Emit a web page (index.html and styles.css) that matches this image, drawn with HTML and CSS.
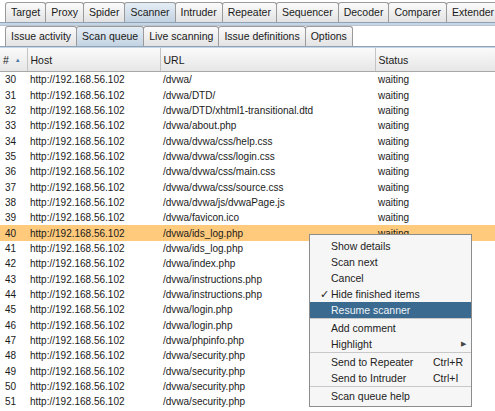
FILE: index.html
```html
<!DOCTYPE HTML>
<html>
<head>
<meta charset="UTF-8">
<link rel="stylesheet" href="styles.css">
</head>
<body>

<!-- top level tools -->
<div class="tabs main-tabs">
    <div class="tab">Target</div>
    <div class="tab">Proxy</div>
    <div class="tab">Spider</div>
    <div class="tab active">Scanner</div>
    <div class="tab">Intruder</div>
    <div class="tab">Repeater</div>
    <div class="tab">Sequencer</div>
    <div class="tab">Decoder</div>
    <div class="tab">Comparer</div>
    <div class="tab">Extender</div>
</div>
<div class="band"></div>

<!-- scanner sub tabs -->
<div class="tabs sub-tabs">
    <div class="tab">Issue activity</div>
    <div class="tab active">Scan queue</div>
    <div class="tab">Live scanning</div>
    <div class="tab">Issue definitions</div>
    <div class="tab">Options</div>
</div>
<div class="band thin"></div>

<div class="queue">
    <table class="table">
        <colgroup>
            <col class="c-num"><col class="c-host"><col class="c-url"><col class="c-status">
        </colgroup>
        <tr class="head">
            <th>#<span class="sort">&#9650;</span></th><th>Host</th><th>URL</th><th>Status</th>
        </tr>
        <tr><td>30</td><td>http://192.168.56.102</td><td>/dvwa/</td><td>waiting</td></tr>
        <tr><td>31</td><td>http://192.168.56.102</td><td>/dvwa/DTD/</td><td>waiting</td></tr>
        <tr><td>32</td><td>http://192.168.56.102</td><td>/dvwa/DTD/xhtml1-transitional.dtd</td><td>waiting</td></tr>
        <tr><td>33</td><td>http://192.168.56.102</td><td>/dvwa/about.php</td><td>waiting</td></tr>
        <tr><td>34</td><td>http://192.168.56.102</td><td>/dvwa/dvwa/css/help.css</td><td>waiting</td></tr>
        <tr><td>35</td><td>http://192.168.56.102</td><td>/dvwa/dvwa/css/login.css</td><td>waiting</td></tr>
        <tr><td>36</td><td>http://192.168.56.102</td><td>/dvwa/dvwa/css/main.css</td><td>waiting</td></tr>
        <tr><td>37</td><td>http://192.168.56.102</td><td>/dvwa/dvwa/css/source.css</td><td>waiting</td></tr>
        <tr><td>38</td><td>http://192.168.56.102</td><td>/dvwa/dvwa/js/dvwaPage.js</td><td>waiting</td></tr>
        <tr><td>39</td><td>http://192.168.56.102</td><td>/dvwa/favicon.ico</td><td>waiting</td></tr>
        <tr class="selected"><td>40</td><td>http://192.168.56.102</td><td>/dvwa/ids_log.php</td><td>waiting</td></tr>
        <!-- status cells below are hidden by the popup menu -->
        <tr><td>41</td><td>http://192.168.56.102</td><td>/dvwa/ids_log.php</td><td></td></tr>
        <tr><td>42</td><td>http://192.168.56.102</td><td>/dvwa/index.php</td><td></td></tr>
        <tr><td>43</td><td>http://192.168.56.102</td><td>/dvwa/instructions.php</td><td></td></tr>
        <tr><td>44</td><td>http://192.168.56.102</td><td>/dvwa/instructions.php</td><td></td></tr>
        <tr><td>45</td><td>http://192.168.56.102</td><td>/dvwa/login.php</td><td></td></tr>
        <tr><td>46</td><td>http://192.168.56.102</td><td>/dvwa/login.php</td><td></td></tr>
        <tr><td>47</td><td>http://192.168.56.102</td><td>/dvwa/phpinfo.php</td><td></td></tr>
        <tr><td>48</td><td>http://192.168.56.102</td><td>/dvwa/security.php</td><td></td></tr>
        <tr><td>49</td><td>http://192.168.56.102</td><td>/dvwa/security.php</td><td></td></tr>
        <tr><td>50</td><td>http://192.168.56.102</td><td>/dvwa/security.php</td><td></td></tr>
        <tr><td>51</td><td>http://192.168.56.102</td><td>/dvwa/security.php</td><td></td></tr>
    </table>

    <!-- right click menu -->
    <ul class="menu">
        <li>Show details</li>
        <li>Scan next</li>
        <li>Cancel</li>
        <li><span class="check">&#10003;</span>Hide finished items</li>
        <li class="hover">Resume scanner</li>
        <li class="sep"></li>
        <li>Add comment</li>
        <li>Highlight<span class="arrow">&#9654;</span></li>
        <li class="sep"></li>
        <li>Send to Repeater<span class="key">Ctrl+R</span></li>
        <li>Send to Intruder<span class="key">Ctrl+I</span></li>
        <li class="sep"></li>
        <li>Scan queue help</li>
    </ul>
</div>

</body>
</html>
```

FILE: styles.css
```css
html, body {
    margin: 0;
    width: 495px;
    height: 411px;
    overflow: hidden;
    font-family: "Liberation Sans", Arial, sans-serif;
    font-size: 10px;
    color: #1a1a1a;
    background-color: white;
}

.tabs {
    display: flex;
    padding-left: 5px;
    align-items: flex-end;
}

.main-tabs {
    height: 22px;
}

.sub-tabs {
    height: 20px;
}

.tab {
    height: 19px;
    line-height: 19px;
    padding: 0 5px;
    font-size: 10.5px;
    border: 1px solid #9a9a9a;
    border-bottom: none;
    border-radius: 3px 3px 0 0;
    margin-right: -1px;
    background: linear-gradient(#fbfbfb, #e3e3e3);
}

.tab.active {
    background: linear-gradient(#e4edf5, #c3d3e2);
}

.band {
    height: 2px;
    background-color: #c6d5e3;
    border-top: 1px solid #8ea3b7;
    border-bottom: 1px solid #b9c6d2;
}

.band.thin {
    height: 1px;
    border-bottom: none;
}

.queue {
    position: relative;
}

.table {
    border-collapse: collapse;
    table-layout: fixed;
    width: 495px;
}

.c-num { width: 27px; }
.c-host { width: 133px; }
.c-url { width: 215px; }
.c-status { width: 120px; }

.table th {
    height: 23px;
    padding: 0 3px;
    text-align: left;
    font-weight: normal;
    font-size: 10.5px;
    background: linear-gradient(#fafafa, #e6e6e6);
    border-right: 1px solid #c4c4c4;
    border-bottom: 1px solid #a8a8a8;
}

.sort {
    font-size: 6px;
    color: #4d7aa6;
    margin-left: 6px;
    vertical-align: 2px;
}

.table td {
    height: 15.35px;
    padding: 0 3px;
    white-space: nowrap;
    overflow: hidden;
}

.table td:first-child {
    padding-left: 5px;
}

.table tr.selected td {
    background-color: #ffca7c;
}

.menu {
    position: absolute;
    left: 309px;
    top: 186px;
    width: 161px;
    margin: 0;
    padding: 3px 0 2px 0;
    list-style: none;
    background-color: #f6f6f6;
    border: 1px solid #8c8c8c;
    font-size: 10.5px;
}

.menu li {
    position: relative;
    height: 16px;
    line-height: 16px;
    padding-left: 21px;
    color: #222;
}

.menu li.hover {
    background-color: #3a6a90;
    color: #f0f4f8;
}

.menu li.sep {
    height: 0;
    margin: 0 0 1px 0;
    border-top: 1px solid #c8c8c8;
}

.check {
    position: absolute;
    left: 10px;
}

.key {
    position: absolute;
    left: 123px;
}

.arrow {
    position: absolute;
    right: 5px;
    font-size: 7px;
    color: #444;
}
```
